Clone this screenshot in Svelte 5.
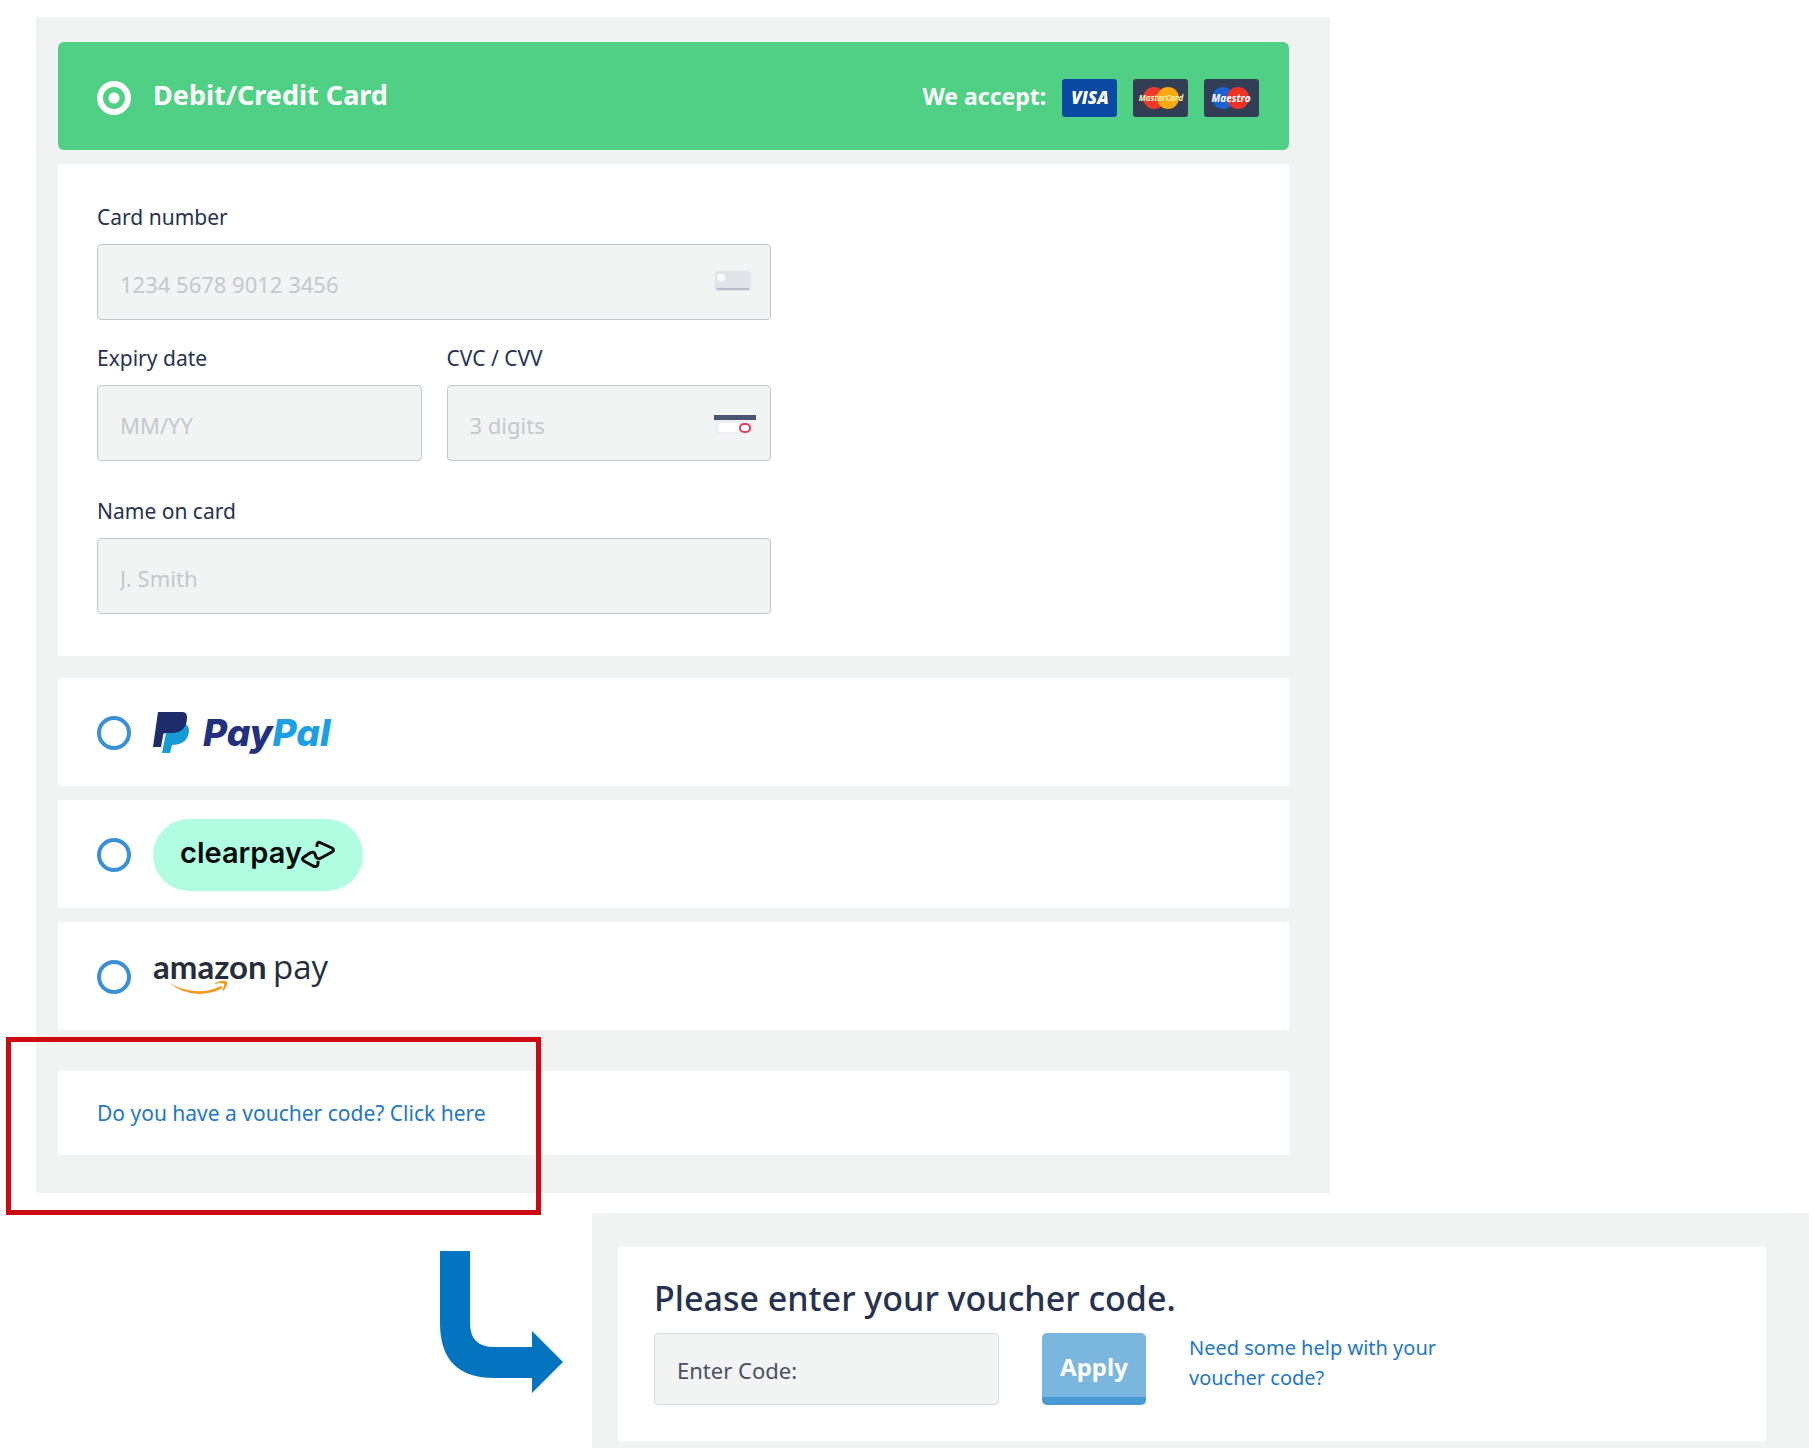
<script lang="ts">
	let method = $state('card');
	let cardNumber = $state('');
	let expiry = $state('');
	let cvc = $state('');
	let name = $state('');
	let voucher = $state('');
</script>

<main class="page">
	<section class="payment-panel">
		<div class="option option-card">
			<label class="option-label">
				<input class="radio radio-light" type="radio" name="method" value="card" bind:group={method} />
				<span class="option-title">Debit/Credit Card</span>
			</label>
			<div class="accepted">
				<span class="accepted-text">We accept:</span>
				<svg class="brand" viewBox="0 0 55 38" role="img" aria-label="Visa">
					<rect width="55" height="38" rx="3" fill="#0b4aa2" />
					<text x="28" y="25" class="visa-text" text-anchor="middle">VISA</text>
				</svg>
				<svg class="brand" viewBox="0 0 55 38" role="img" aria-label="Mastercard">
					<rect width="55" height="38" rx="3" fill="#323e54" />
					<circle cx="21" cy="19" r="11" fill="#ee3a2c" />
					<circle cx="35" cy="19" r="11" fill="#fba912" />
					<text x="28" y="22" class="tiny-text tiny-cream" text-anchor="middle">MasterCard</text>
				</svg>
				<svg class="brand" viewBox="0 0 55 38" role="img" aria-label="Maestro">
					<rect width="55" height="38" rx="3" fill="#323e54" />
					<circle cx="19" cy="19" r="11" fill="#1d62cf" />
					<circle cx="34" cy="19" r="11" fill="#ee3324" />
					<text x="27" y="23" class="tiny-text tiny-wide" text-anchor="middle">Maestro</text>
				</svg>
			</div>
		</div>

		<form class="card-form">
			<div class="fields">
				<div class="field">
					<label for="card-number">Card number</label>
					<div class="control">
						<input id="card-number" type="text" placeholder="1234 5678 9012 3456" bind:value={cardNumber} />
						<svg class="control-icon" width="42" height="24" viewBox="0 0 42 24" aria-hidden="true">
							<rect x="1" y="2" width="36" height="20" rx="2" fill="#e1e3ea" />
							<rect x="3" y="5" width="8" height="7" rx="2" fill="#fbfbfc" />
							<rect x="3" y="19" width="32" height="2" fill="#b9bdc9" />
						</svg>
					</div>
				</div>
				<div class="field-row">
					<div class="field">
						<label for="expiry">Expiry date</label>
						<div class="control">
							<input id="expiry" type="text" placeholder="MM/YY" bind:value={expiry} />
						</div>
					</div>
					<div class="field">
						<label for="cvc">CVC / CVV</label>
						<div class="control">
							<input id="cvc" type="text" placeholder="3 digits" bind:value={cvc} />
							<svg class="control-icon" width="42" height="24" viewBox="0 0 42 24" aria-hidden="true">
								<rect x="1" y="6" width="38" height="18" rx="2" fill="#eceef2" />
								<rect y="5" width="42" height="5" fill="#495673" />
								<rect x="5" y="13" width="20" height="9" fill="#fff" />
								<rect x="26" y="14" width="10" height="8" rx="4" fill="#fff" stroke="#e23a62" stroke-width="2" />
							</svg>
						</div>
					</div>
				</div>
				<div class="field field-name">
					<label for="name">Name on card</label>
					<div class="control">
						<input id="name" type="text" placeholder="J. Smith" bind:value={name} />
					</div>
				</div>
			</div>
		</form>

		<div class="other-options">
			<label class="option option-label">
				<input class="radio" type="radio" name="method" value="paypal" aria-label="PayPal" bind:group={method} />
				<svg width="190" height="54" viewBox="0 0 190 54" aria-hidden="true">
					<path d="M31 17q8 4 3 15q-4 7-15 7l-2 8H9l4-20z" fill="#169bd7" />
					<path d="M5 6h24q5 0 5 5q0 15-14 16h-7q-3 0-3 3l-2 11H0z" fill="#1f2c6b" />
					<text x="50" y="40" class="paypal-text" fill="#22307d">Pay<tspan fill="#1c9fe4">Pal</tspan></text>
				</svg>
			</label>

			<label class="option option-label">
				<input class="radio" type="radio" name="method" value="clearpay" aria-label="Clearpay" bind:group={method} />
				<svg width="210" height="72" viewBox="0 0 210 72" aria-hidden="true">
					<rect width="210" height="72" rx="36" fill="#b0fde2" />
					<text x="27" y="44" class="clearpay-text">clearpay</text>
					<path
						d="M164 28v-2q0-4 4-2l11 5q3 2 0 4l-11 6q-3 2-5-1l-1-3q-1-3-5-1l-6 4q-3 2 0 4l9 5q5 2 5-3v-2"
						fill="none"
						stroke="#0a0a0a"
						stroke-width="3"
						stroke-linejoin="round"
					/>
				</svg>
			</label>

			<label class="option option-label">
				<input class="radio" type="radio" name="method" value="amazon" aria-label="Amazon Pay" bind:group={method} />
				<svg width="190" height="62" viewBox="0 0 190 62" aria-hidden="true">
					<text x="0" y="33" class="amazon-text">amazon</text>
					<text x="120" y="33" class="amazon-pay-text">pay</text>
					<path d="M16 37q28 15 52 3l2 2q-29 14-54-5z" fill="#f7981d" />
					<path d="M62 37q9-4 12-1q1 4-4 9l-1-1q3-4 2-6q-2-2-9 0z" fill="#f7981d" />
				</svg>
			</label>
		</div>

		<div class="voucher-prompt">
			<a href="#voucher">Do you have a voucher code? Click here</a>
			<span class="highlight"></span>
		</div>
	</section>

	<div class="voucher-row">
		<svg class="arrow" width="123" height="142" viewBox="0 0 123 142" aria-hidden="true">
			<path d="M0 0h30v72q0 24 24 24h38V80l31 31-31 31v-15H54Q0 127 0 72z" fill="#0474c0" />
		</svg>

		<section class="voucher-panel" id="voucher">
			<form class="voucher-form">
				<h2>Please enter your voucher code.</h2>
				<div class="voucher-controls">
					<input class="voucher-input" type="text" placeholder="Enter Code:" aria-label="Enter Code:" bind:value={voucher} />
					<button class="apply" type="button">Apply</button>
					<a class="help" href="#help">Need some help with your voucher code?</a>
				</div>
			</form>
		</section>
	</div>
</main>

<style>
	:global(body) {
		background: #fff;
	}

	.page {
		box-sizing: border-box;
		padding: 17px 5px 0 36px;
		font-family: 'Noto Sans', 'Open Sans', sans-serif;
		font-size: 21px;
		line-height: 28px;
		color: #26324f;
	}

	.page * {
		box-sizing: border-box;
	}

	.payment-panel {
		width: 73%;
		padding: 25px 41px 38px 22px;
		background: #f1f2f2;
	}

	.option {
		height: 108px;
		padding: 2px 39px 0;
		background: #fff;
	}

	.option-label {
		display: flex;
		align-items: center;
		gap: 22px;
	}

	.option-card {
		display: flex;
		align-items: center;
		justify-content: space-between;
		padding-top: 4px;
		padding-right: 30px;
		border-radius: 6px;
		background: #50d084;
		color: #fff;
		font-weight: 700;
	}

	.option-title,
	.accepted-text {
		font-size: 27px;
		line-height: 36px;
		padding-bottom: 6px;
	}

	.accepted-text {
		font-size: 23px;
		padding-bottom: 4px;
	}

	.accepted {
		display: flex;
		align-items: center;
		gap: 16px;
	}

	.brand {
		width: 55px;
		height: 38px;
	}

	.visa-text {
		font: italic 800 17px 'Open Sans', sans-serif;
		fill: #fff;
	}

	.tiny-text {
		font: italic 700 8px 'Open Sans', sans-serif;
		fill: #fff;
	}

	.tiny-cream {
		fill: #fff3b8;
	}

	.tiny-wide {
		font-size: 10px;
	}

	.radio {
		appearance: none;
		flex: none;
		width: 34px;
		height: 34px;
		margin: 0;
		border: 4px solid #3a8fd9;
		border-radius: 50%;
		background: #fff;
	}

	.radio-light {
		border: 6px solid #fff;
		background: transparent;
	}

	.radio-light:checked {
		background: radial-gradient(circle, #fff 5px, transparent 6px);
	}

	.card-form {
		margin-top: 14px;
		padding: 39px 39px 42px;
		background: #fff;
	}

	.fields {
		display: flex;
		flex-direction: column;
		gap: 24px;
		max-width: 674px;
	}

	.field {
		display: flex;
		flex: 1;
		flex-direction: column;
		gap: 13px;
	}

	.field-row {
		display: flex;
		gap: 25px;
	}

	.field-name {
		padding-top: 12px;
	}

	.control {
		position: relative;
	}

	.control input,
	.voucher-input {
		width: 100%;
		height: 76px;
		padding: 4px 22px 0;
		border: 1px solid #c3c7cb;
		border-radius: 4px;
		background: #f2f3f3;
		color: inherit;
		font: inherit;
		font-size: 22px;
	}

	.control input::placeholder {
		color: #c4c8cc;
		opacity: 1;
	}

	.control-icon {
		position: absolute;
		top: 25px;
		right: 15px;
	}

	.other-options {
		display: flex;
		flex-direction: column;
		gap: 14px;
		margin-top: 22px;
	}

	.paypal-text {
		font: italic 800 37px Inter, sans-serif;
	}

	.clearpay-text {
		font: 600 29px Inter, sans-serif;
		fill: #0a0a0a;
	}

	.amazon-text {
		font: 700 33px Lato, sans-serif;
		fill: #262e3c;
	}

	.amazon-pay-text {
		font: 400 33px 'Open Sans', sans-serif;
		fill: #262e3c;
	}

	.voucher-prompt {
		position: relative;
		margin-top: 41px;
		padding: 28px 39px;
		background: #fff;
	}

	a {
		color: #2277c4;
		text-decoration: none;
	}

	/* red marker drawn over the prompt */
	.highlight {
		position: absolute;
		top: -34px;
		bottom: -60px;
		left: -52px;
		width: 535px;
		border: 5px solid #cb0a12;
		pointer-events: none;
	}

	.voucher-row {
		display: flex;
		align-items: flex-start;
		justify-content: flex-end;
		gap: 29px;
		margin-top: 20px;
	}

	.arrow {
		flex: none;
		margin-top: 38px;
	}

	.voucher-panel {
		flex: 0 1 1217px;
		padding: 34px 43px 7px 26px;
		background: #f1f2f2;
	}

	.voucher-form {
		padding: 28px 36px 36px;
		background: #fff;
	}

	h2 {
		margin: 0 0 12px;
		font-size: 34px;
		font-weight: 500;
		line-height: 46px;
	}

	.voucher-controls {
		display: flex;
		gap: 43px;
	}

	.voucher-input {
		width: 345px;
		height: 72px;
		padding-top: 2px;
		border-color: #d9dcdf;
	}

	.voucher-input::placeholder {
		color: #4a5163;
		opacity: 1;
	}

	.apply {
		width: 104px;
		height: 72px;
		padding: 4px 0 0;
		border: 0;
		border-bottom: 8px solid #4a9ad4;
		border-radius: 5px;
		background: #7ab6de;
		color: #fff;
		font: inherit;
		font-size: 24px;
		font-weight: 700;
	}

	.help {
		width: 260px;
		font-size: 20px;
		line-height: 30px;
	}
</style>
